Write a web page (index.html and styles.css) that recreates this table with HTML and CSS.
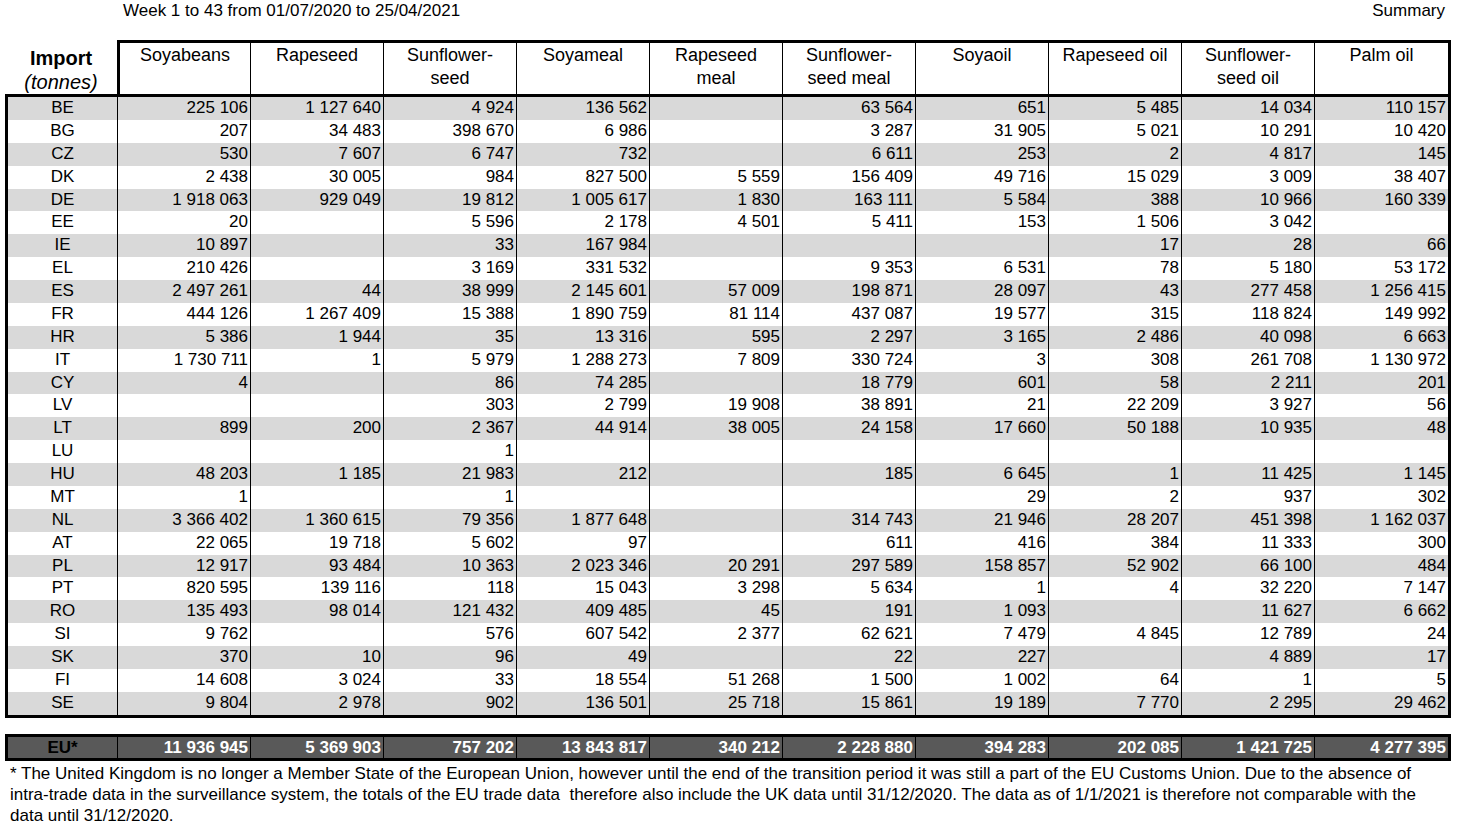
FILE: index.html
```html
<!DOCTYPE html>
<html lang="en">
<head>
<meta charset="utf-8">
<title>Import summary</title>
<link rel="stylesheet" href="styles.css">
</head>
<body>
<div class="topline">
  <span class="title">Week 1 to 43 from 01/07/2020 to 25/04/2021</span>
  <span class="summary">Summary</span>
</div>
<div class="head">
  <div class="corner"><b>Import</b><i>(tonnes)</i></div>
  <div class="hcell first">Soyabeans</div>
  <div class="hcell">Rapeseed</div>
  <div class="hcell">Sunflower-<br>seed</div>
  <div class="hcell">Soyameal</div>
  <div class="hcell">Rapeseed<br>meal</div>
  <div class="hcell">Sunflower-<br>seed meal</div>
  <div class="hcell">Soyaoil</div>
  <div class="hcell">Rapeseed oil</div>
  <div class="hcell">Sunflower-<br>seed oil</div>
  <div class="hcell last">Palm oil</div>
</div>
<div class="data">
  <div class="row"><span>BE</span><span>225 106</span><span>1 127 640</span><span>4 924</span><span>136 562</span><span></span><span>63 564</span><span>651</span><span>5 485</span><span>14 034</span><span>110 157</span></div>
  <div class="row"><span>BG</span><span>207</span><span>34 483</span><span>398 670</span><span>6 986</span><span></span><span>3 287</span><span>31 905</span><span>5 021</span><span>10 291</span><span>10 420</span></div>
  <div class="row"><span>CZ</span><span>530</span><span>7 607</span><span>6 747</span><span>732</span><span></span><span>6 611</span><span>253</span><span>2</span><span>4 817</span><span>145</span></div>
  <div class="row"><span>DK</span><span>2 438</span><span>30 005</span><span>984</span><span>827 500</span><span>5 559</span><span>156 409</span><span>49 716</span><span>15 029</span><span>3 009</span><span>38 407</span></div>
  <div class="row"><span>DE</span><span>1 918 063</span><span>929 049</span><span>19 812</span><span>1 005 617</span><span>1 830</span><span>163 111</span><span>5 584</span><span>388</span><span>10 966</span><span>160 339</span></div>
  <div class="row"><span>EE</span><span>20</span><span></span><span>5 596</span><span>2 178</span><span>4 501</span><span>5 411</span><span>153</span><span>1 506</span><span>3 042</span><span></span></div>
  <div class="row"><span>IE</span><span>10 897</span><span></span><span>33</span><span>167 984</span><span></span><span></span><span></span><span>17</span><span>28</span><span>66</span></div>
  <div class="row"><span>EL</span><span>210 426</span><span></span><span>3 169</span><span>331 532</span><span></span><span>9 353</span><span>6 531</span><span>78</span><span>5 180</span><span>53 172</span></div>
  <div class="row"><span>ES</span><span>2 497 261</span><span>44</span><span>38 999</span><span>2 145 601</span><span>57 009</span><span>198 871</span><span>28 097</span><span>43</span><span>277 458</span><span>1 256 415</span></div>
  <div class="row"><span>FR</span><span>444 126</span><span>1 267 409</span><span>15 388</span><span>1 890 759</span><span>81 114</span><span>437 087</span><span>19 577</span><span>315</span><span>118 824</span><span>149 992</span></div>
  <div class="row"><span>HR</span><span>5 386</span><span>1 944</span><span>35</span><span>13 316</span><span>595</span><span>2 297</span><span>3 165</span><span>2 486</span><span>40 098</span><span>6 663</span></div>
  <div class="row"><span>IT</span><span>1 730 711</span><span>1</span><span>5 979</span><span>1 288 273</span><span>7 809</span><span>330 724</span><span>3</span><span>308</span><span>261 708</span><span>1 130 972</span></div>
  <div class="row"><span>CY</span><span>4</span><span></span><span>86</span><span>74 285</span><span></span><span>18 779</span><span>601</span><span>58</span><span>2 211</span><span>201</span></div>
  <div class="row"><span>LV</span><span></span><span></span><span>303</span><span>2 799</span><span>19 908</span><span>38 891</span><span>21</span><span>22 209</span><span>3 927</span><span>56</span></div>
  <div class="row"><span>LT</span><span>899</span><span>200</span><span>2 367</span><span>44 914</span><span>38 005</span><span>24 158</span><span>17 660</span><span>50 188</span><span>10 935</span><span>48</span></div>
  <div class="row"><span>LU</span><span></span><span></span><span>1</span><span></span><span></span><span></span><span></span><span></span><span></span><span></span></div>
  <div class="row"><span>HU</span><span>48 203</span><span>1 185</span><span>21 983</span><span>212</span><span></span><span>185</span><span>6 645</span><span>1</span><span>11 425</span><span>1 145</span></div>
  <div class="row"><span>MT</span><span>1</span><span></span><span>1</span><span></span><span></span><span></span><span>29</span><span>2</span><span>937</span><span>302</span></div>
  <div class="row"><span>NL</span><span>3 366 402</span><span>1 360 615</span><span>79 356</span><span>1 877 648</span><span></span><span>314 743</span><span>21 946</span><span>28 207</span><span>451 398</span><span>1 162 037</span></div>
  <div class="row"><span>AT</span><span>22 065</span><span>19 718</span><span>5 602</span><span>97</span><span></span><span>611</span><span>416</span><span>384</span><span>11 333</span><span>300</span></div>
  <div class="row"><span>PL</span><span>12 917</span><span>93 484</span><span>10 363</span><span>2 023 346</span><span>20 291</span><span>297 589</span><span>158 857</span><span>52 902</span><span>66 100</span><span>484</span></div>
  <div class="row"><span>PT</span><span>820 595</span><span>139 116</span><span>118</span><span>15 043</span><span>3 298</span><span>5 634</span><span>1</span><span>4</span><span>32 220</span><span>7 147</span></div>
  <div class="row"><span>RO</span><span>135 493</span><span>98 014</span><span>121 432</span><span>409 485</span><span>45</span><span>191</span><span>1 093</span><span></span><span>11 627</span><span>6 662</span></div>
  <div class="row"><span>SI</span><span>9 762</span><span></span><span>576</span><span>607 542</span><span>2 377</span><span>62 621</span><span>7 479</span><span>4 845</span><span>12 789</span><span>24</span></div>
  <div class="row"><span>SK</span><span>370</span><span>10</span><span>96</span><span>49</span><span></span><span>22</span><span>227</span><span></span><span>4 889</span><span>17</span></div>
  <div class="row"><span>FI</span><span>14 608</span><span>3 024</span><span>33</span><span>18 554</span><span>51 268</span><span>1 500</span><span>1 002</span><span>64</span><span>1</span><span>5</span></div>
  <div class="row"><span>SE</span><span>9 804</span><span>2 978</span><span>902</span><span>136 501</span><span>25 718</span><span>15 861</span><span>19 189</span><span>7 770</span><span>2 295</span><span>29 462</span></div>
</div>
<div class="total">
  <div class="row"><span>EU*</span><span>11 936 945</span><span>5 369 903</span><span>757 202</span><span>13 843 817</span><span>340 212</span><span>2 228 880</span><span>394 283</span><span>202 085</span><span>1 421 725</span><span>4 277 395</span></div>
</div>
<p class="note">* The United Kingdom is no longer a Member State of the European Union, however until the end of the transition period it was still a part of the EU Customs Union. Due to the absence of<br>intra-trade data in the surveillance system, the totals of the EU trade data &nbsp;therefore also include the UK data until 31/12/2020. The data as of 1/1/2021 is therefore not comparable with the<br>data until 31/12/2020.</p>
</body>
</html>
```

FILE: styles.css
```css
* {
  box-sizing: border-box;
}

body {
  margin: 0;
  padding: 0 0 0 5px;
  font-family: "Liberation Sans", Arial, sans-serif;
  color: #000;
  background: #fff;
}

.topline {
  display: flex;
  justify-content: space-between;
  width: 1446px;
  height: 40px;
  padding-top: 1px;
  font-size: 17px;
  line-height: 20px;
}

.title {
  padding-left: 118px;
}

.summary {
  padding-right: 6px;
}

.head {
  display: grid;
  grid-template-columns: 112px 134px repeat(8, 133px) 1fr;
  width: 1446px;
  height: 54px;
}

.corner {
  display: flex;
  flex-direction: column;
  align-items: center;
  padding-top: 6px;
  font-size: 20px;
  line-height: 24px;
}

.corner b {
  font-weight: bold;
}

.corner i {
  font-style: italic;
}

.hcell {
  border-top: 3px solid #000;
  border-right: 1px solid #000;
  padding-top: 1px;
  text-align: center;
  font-size: 18px;
  line-height: 23px;
}

.hcell.first {
  border-left: 3px solid #000;
}

.hcell.last {
  border-right: 3px solid #000;
}

.data {
  width: 1446px;
  border: 3px solid #000;
}

.row {
  display: grid;
  grid-template-columns: 110px repeat(9, 133px) 1fr;
  height: 22.89px;
  font-size: 17px;
  line-height: 22px;
}

.row > span {
  border-right: 1px solid #000;
  text-align: right;
  padding-right: 2px;
  white-space: nowrap;
}

.row > span:first-child {
  text-align: center;
  padding-right: 0;
}

.row > span:last-child {
  border-right: 0;
}

.data .row:nth-child(odd) {
  background: #d9d9d9;
}

.total {
  width: 1446px;
  margin-top: 16px;
  border: 3px solid #000;
  background: #595959;
}

.total .row {
  height: 21px;
  line-height: 21px;
  font-weight: bold;
  color: #fff;
}

.total .row > span:first-child {
  color: #000;
}

.note {
  margin: 0;
  padding: 2px 0 0 5px;
  font-size: 17px;
  line-height: 21px;
  white-space: nowrap;
}
```
